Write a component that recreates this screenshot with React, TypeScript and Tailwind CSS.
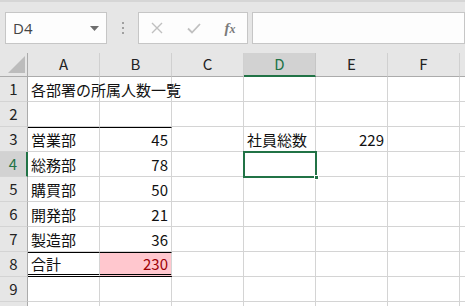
import React from "react";

const cols = ["A", "B", "C", "D", "E", "F"];
const font = { fontFamily: '"Noto Sans CJK JP", "Noto Sans", sans-serif' };

type Cell = { text?: string; align?: "left" | "right"; extra?: string; color?: string };

const data: Record<number, Record<string, Cell>> = {
  1: { A: { text: "各部署の所属人数一覧" } },
  3: {
    A: { text: "営業部", extra: "border-t border-t-black" },
    B: { text: "45", align: "right", extra: "border-t border-t-black" },
    D: { text: "社員総数" },
    E: { text: "229", align: "right" },
  },
  4: { A: { text: "総務部" }, B: { text: "78", align: "right" } },
  5: { A: { text: "購買部" }, B: { text: "50", align: "right" } },
  6: { A: { text: "開発部" }, B: { text: "21", align: "right" } },
  7: { A: { text: "製造部" }, B: { text: "36", align: "right" } },
  8: {
    A: { text: "合計", extra: "border-t border-t-black border-b-[3px] border-double border-b-black" },
    B: {
      text: "230",
      align: "right",
      extra: "border-t border-t-black border-b-[3px] border-double border-b-black bg-[#ffc7ce]",
      color: "text-[#9c0006]",
    },
  },
};

export default function App() {
  const rows = [1, 2, 3, 4, 5, 6, 7, 8, 9];
  return (
    <div className="w-[465px] h-[306px] overflow-hidden bg-[#e6e6e6] relative" style={font}>
      {/* toolbar */}
      <div className="h-[53px] border-t-2 border-t-[#d6d6d6] flex items-start pt-[10px] pl-[5px]">
        <div className="w-[102px] h-[32px] bg-[#fdfdfd] border border-[#c6c6c6] flex items-center justify-between pl-[7px] pr-[7px]">
          <span className="text-[15px] text-[#444] leading-none" style={{ fontFamily: '"Open Sans", "Noto Sans", sans-serif' }}>D4</span>
          <svg width="9" height="5" viewBox="0 0 9 5"><path d="M0 0 L9 0 L4.5 5 Z" fill="#6e6e6e" /></svg>
        </div>
        <div className="w-[31px] h-[32px] flex flex-col items-center justify-center gap-[3px]">
          <div className="w-[2px] h-[2px] bg-[#a0a0a0]" />
          <div className="w-[2px] h-[2px] bg-[#a0a0a0]" />
          <div className="w-[2px] h-[2px] bg-[#a0a0a0]" />
        </div>
        <div className="w-[110px] h-[32px] bg-[#fdfdfd] border border-[#c6c6c6] flex items-center">
          <div className="w-[36px] flex justify-center">
            <svg width="12" height="12" viewBox="0 0 12 12"><path d="M1 1 L11 11 M11 1 L1 11" stroke="#c0c0c0" strokeWidth="1.4" /></svg>
          </div>
          <div className="w-[38px] flex justify-center">
            <svg width="14" height="11" viewBox="0 0 14 11"><path d="M1 5.5 L5 9.5 L13 1" stroke="#c0c0c0" strokeWidth="1.8" fill="none" /></svg>
          </div>
          <div className="w-[34px] flex justify-center">
            <span className="text-[15px] italic font-bold text-[#7a7a7a]" style={{ fontFamily: '"Liberation Serif", serif' }}>f<span className="text-[12px]">x</span></span>
          </div>
        </div>
        <div className="ml-[4px] flex-1 h-[32px] bg-[#fdfdfd] border border-[#c6c6c6]" />
      </div>

      {/* grid */}
      <div className="grid grid-cols-[28px_72px_72px_72px_72px_72px_72px_1fr] bg-white">
        {/* header row */}
        <div className="h-[24px] bg-[#e6e6e6] border-b border-b-[#ababab] border-r border-r-[#ababab] relative">
          <svg className="absolute left-[8px] top-[3px]" width="17" height="17" viewBox="0 0 17 17"><path d="M0 17 L17 17 L17 0 Z" fill="#bcbcbc" /></svg>
        </div>
        {cols.map((c) => (
          <div
            key={c}
            className={
              "h-[24px] flex items-center justify-center text-[15px] border-r " +
              (c === "D"
                ? "bg-[#d2d2d2] border-r-[#c6c6c6] border-b-2 border-b-[#217346] text-[#217346]"
                : "bg-[#e6e6e6] border-r-[#d0d0d0] border-b border-b-[#ababab] text-[#222]")
            }
          >
            {c}
          </div>
        ))}
        <div className="h-[24px] bg-[#e6e6e6] border-b border-b-[#ababab]" />

        {rows.map((r) => (
          <React.Fragment key={r}>
            <div
              className={
                "h-[25px] flex items-center justify-center text-[15px] border-b border-b-[#d4d4d4] " +
                (r === 4
                  ? "bg-[#d2d2d2] text-[#217346] border-r-2 border-r-[#217346]"
                  : "bg-[#e6e6e6] text-[#222] border-r border-r-[#ababab]")
              }
            >
              {r}
            </div>
            {cols.map((c) => {
              const cell = data[r]?.[c];
              const isSel = r === 4 && c === "D";
              return (
                <div
                  key={c}
                  className={
                    "h-[25px] relative flex items-center px-[3px] text-[15px] border-r border-r-[#d4d4d4] " +
                    (cell?.extra && cell.extra.includes("border-b-black") ? "" : "border-b border-b-[#d4d4d4] ") +
                    (cell?.align === "right" ? "justify-end " : "justify-start ") +
                    (cell?.color ?? "text-[#111] ") +
                    " " +
                    (cell?.extra ?? "")
                  }
                >
                  {cell?.text && <span className="leading-none whitespace-nowrap relative z-10">{cell.text}</span>}
                  {isSel && (
                    <>
                      <div className="absolute left-[-1px] top-[-1px] w-[74px] h-[27px] border-2 border-[#217346] z-20" />
                      <div className="absolute left-[70px] top-[23px] w-[5px] h-[5px] bg-[#217346] border border-white z-30" />
                    </>
                  )}
                </div>
              );
            })}
            <div className="h-[25px] border-b border-b-[#d4d4d4] bg-white" />
          </React.Fragment>
        ))}
        <div className="h-[10px] bg-[#e6e6e6] border-r border-r-[#ababab]" />
        {cols.map((c) => (
          <div key={c} className="h-[10px] border-r border-r-[#d4d4d4]" />
        ))}
        <div className="h-[10px]" />
      </div>
    </div>
  );
}
